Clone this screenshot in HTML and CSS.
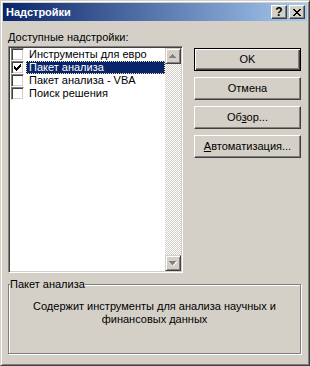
FILE: index.html
```html
<!DOCTYPE html>
<html lang="ru">
<head>
    <meta charset="UTF-8">
    <title>Надстройки</title>
    <link rel="stylesheet" href="styles.css">
</head>
<body>
    <div class="window">
        <div class="titlebar">
            <span class="title">Надстройки</span>
            <div class="caption-buttons">
                <div class="cap-btn help">?</div>
                <div class="cap-btn close">
                    <svg width="8" height="7" viewBox="0 0 8 7" shape-rendering="crispEdges">
                        <path d="M0 0h2v1h-2zM6 0h2v1h-2zM1 1h2v1h-2zM5 1h2v1h-2zM2 2h4v1h-4zM3 3h2v1h-2zM2 4h4v1h-4zM1 5h2v1h-2zM5 5h2v1h-2zM0 6h2v1h-2zM6 6h2v1h-2z" fill="#000"/>
                    </svg>
                </div>
            </div>
        </div>
        <div class="content">
            <div class="top">
                <div class="left">
                    <div class="label"><u>Д</u>оступные надстройки:</div>
                    <div class="listbox">
                        <div class="items">
                            <div class="item">
                                <span class="check"></span>
                                <span class="text">Инструменты для евро</span>
                            </div>
                            <div class="item selected">
                                <span class="check">
                                    <svg width="7" height="7" viewBox="0 0 7 7" shape-rendering="crispEdges">
                                        <path d="M0 2h1v3h-1zM1 3h1v3h-1zM2 4h1v3h-1zM3 3h1v3h-1zM4 2h1v3h-1zM5 1h1v3h-1zM6 0h1v3h-1z" fill="#000"/>
                                    </svg>
                                </span>
                                <span class="text">Пакет анализа</span>
                            </div>
                            <div class="item">
                                <span class="check"></span>
                                <span class="text">Пакет анализа - VBA</span>
                            </div>
                            <div class="item">
                                <span class="check"></span>
                                <span class="text">Поиск решения</span>
                            </div>
                        </div>
                        <div class="scrollbar">
                            <div class="sb-btn">
                                <svg width="8" height="5" viewBox="0 0 8 5" shape-rendering="crispEdges">
                                    <path d="M4 1h1v1h1v1h1v1h-4z" fill="#fff"/>
                                    <path d="M3 0h1v1h1v1h1v1h1v1h-7v-1h1v-1h1v-1h1z" fill="#808080"/>
                                </svg>
                            </div>
                            <div class="sb-track"></div>
                            <div class="sb-btn">
                                <svg width="8" height="5" viewBox="0 0 8 5" shape-rendering="crispEdges">
                                    <path d="M1 1h7v1h-1v1h-1v1h-1v1h-1v-1h1v-1h1v-1h1z" fill="#fff"/>
                                    <path d="M0 0h7v1h-1v1h-1v1h-1v1h-1v-1h-1v-1h-1v-1h-1z" fill="#808080"/>
                                </svg>
                            </div>
                        </div>
                    </div>
                </div>
                <div class="buttons">
                    <div class="btn default"><span>OK</span></div>
                    <div class="btn"><span>Отмена</span></div>
                    <div class="btn"><span>Об<u>з</u>ор...</span></div>
                    <div class="btn"><span><u>А</u>втоматизация...</span></div>
                </div>
            </div>
            <fieldset class="group">
                <legend>Пакет анализа</legend>
                <p class="desc">Содержит инструменты для анализа научных и<br>финансовых данных</p>
            </fieldset>
        </div>
    </div>
</body>
</html>
```

FILE: styles.css
```css
html, body {
    margin: 0;
    padding: 0;
}

body {
    font-family: "Liberation Sans", Arial, sans-serif;
    font-size: 11px;
    line-height: 13px;
    color: #000;
    background: #d4d0c8;
}

u {
    text-decoration: underline;
    text-underline-offset: 1px;
}

.window {
    width: 310px;
    height: 366px;
    box-sizing: border-box;
    border: 1px solid;
    border-color: #d4d0c8 #404040 #404040 #d4d0c8;
    box-shadow: inset 1px 1px #fff, inset -1px -1px #808080;
    padding: 2px;
    background: #d4d0c8;
    display: flex;
    flex-direction: column;
}

.titlebar {
    height: 18px;
    flex: none;
    background: linear-gradient(to right, #0a246a, #a6caf0);
    display: flex;
    align-items: center;
    justify-content: space-between;
    padding: 0 2px 0 3px;
}

.title {
    color: #fff;
    font-weight: bold;
    font-size: 11px;
}

.caption-buttons {
    display: flex;
    gap: 2px;
}

.cap-btn {
    width: 16px;
    height: 14px;
    box-sizing: border-box;
    background: #d4d0c8;
    border: 1px solid;
    border-color: #fff #404040 #404040 #fff;
    box-shadow: inset -1px -1px #808080;
    display: flex;
    align-items: center;
    justify-content: center;
}

.cap-btn.help {
    font-weight: bold;
    font-size: 12px;
    line-height: 12px;
}

.content {
    flex: 1;
    padding: 10px 6px 0 5px;
    display: flex;
    flex-direction: column;
}

.top {
    display: flex;
    justify-content: space-between;
}

.label {
    height: 13px;
    margin-bottom: 2px;
}

.listbox {
    width: 175px;
    height: 227px;
    box-sizing: border-box;
    background: #fff;
    border: 1px solid;
    border-color: #808080 #fff #fff #808080;
    box-shadow: inset 1px 1px #404040, inset -1px -1px #d4d0c8;
    padding: 1px;
    display: flex;
}

.items {
    flex: 1;
}

.item {
    height: 13px;
    display: flex;
    align-items: center;
}

.check {
    width: 13px;
    height: 13px;
    box-sizing: border-box;
    flex: none;
    margin: 0 2px 0 1px;
    background: #fff;
    border: 1px solid;
    border-color: #808080 #fff #fff #808080;
    box-shadow: inset 1px 1px #404040, inset -1px -1px #d4d0c8;
    display: flex;
    align-items: center;
    justify-content: center;
}

.text {
    flex: 1;
    height: 13px;
    box-sizing: border-box;
    padding: 0 2px;
    white-space: nowrap;
    border: 1px solid transparent;
    line-height: 11px;
}

.selected .text {
    background: #0a246a;
    color: #fff;
    border: 1px dotted #f0e6a0;
}

.scrollbar {
    width: 16px;
    flex: none;
    display: flex;
    flex-direction: column;
}

.sb-btn {
    width: 16px;
    height: 16px;
    box-sizing: border-box;
    background: #d4d0c8;
    border: 1px solid;
    border-color: #d4d0c8 #404040 #404040 #d4d0c8;
    box-shadow: inset 1px 1px #fff, inset -1px -1px #808080;
    display: flex;
    align-items: center;
    justify-content: center;
}

.sb-track {
    flex: 1;
    background: repeating-conic-gradient(#fff 0 25%, #d4d0c8 0 50%) 0 0 / 2px 2px;
}

.buttons {
    display: flex;
    flex-direction: column;
    gap: 6px;
    padding-top: 17px;
}

.btn {
    width: 107px;
    height: 23px;
    box-sizing: border-box;
    background: #d4d0c8;
    border: 1px solid;
    border-color: #fff #404040 #404040 #fff;
    box-shadow: inset -1px -1px #808080;
    display: flex;
    align-items: center;
    justify-content: center;
}

.btn.default {
    border: 1px solid #000;
    box-shadow: inset 1px 1px #fff, inset -1px -1px #404040, inset -2px -2px #808080;
}

.group {
    margin: 5px 0 0 0;
    padding: 0 1px;
    height: 76px;
    box-sizing: border-box;
    border: 1px solid #808080;
    box-shadow: inset 1px 1px #fff, 1px 1px #fff;
}

.group legend {
    padding: 0;
    background: #d4d0c8;
}

.desc {
    margin: 9px 0 0 0;
    text-align: center;
}
```
